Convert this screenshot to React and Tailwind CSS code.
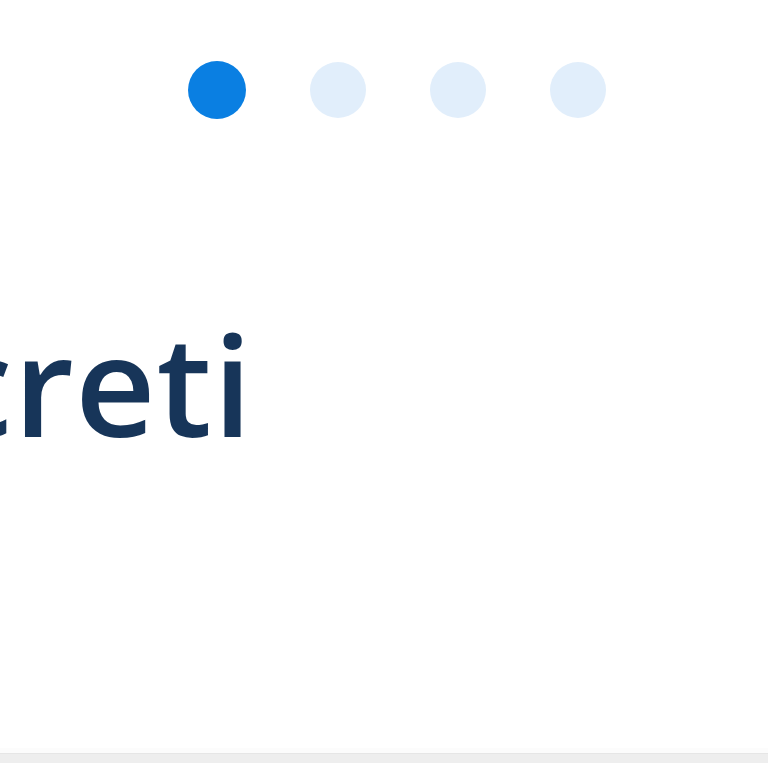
import React from 'react';

const Dot = ({ active }) => (
  <span
    className={
      active
        ? 'block w-[58px] h-[58px] rounded-full bg-[#0a7fe2]'
        : 'block w-[56px] h-[56px] rounded-full bg-[#e1eefb]'
    }
  />
);

const App = () => {
  return (
    <div className="w-[768px] h-[768px] bg-white overflow-hidden flex flex-col">
      {/* step dots */}
      <div className="flex items-center gap-[64px] pl-[188px] pt-[61px] h-[119px]">
        <Dot active />
        <Dot />
        <Dot />
        <Dot />
      </div>

      {/* heading, cut at the left edge */}
      <div className="mt-[194px] h-[140px]">
        <h1
          className="ml-[-57px] whitespace-nowrap text-[140px] leading-none font-semibold tracking-[1px] text-[#173559]"
          style={{ fontFamily: '"Open Sans", "Noto Sans", sans-serif' }}
        >
          creti
        </h1>
      </div>

      <div className="flex-1" />
      <div className="h-[5px] bg-[#fcfcfc]" />
      <div className="h-[10px] bg-[#eeeeee] border-t border-[#e6e6e6]" />
      <div className="h-[5px] bg-white" />
    </div>
  );
};

export default App;
